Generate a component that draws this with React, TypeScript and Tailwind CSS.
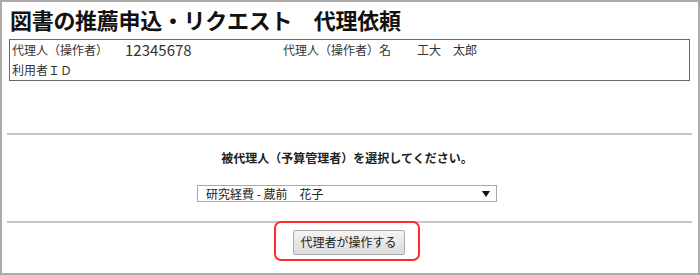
export default function App() {
  return (
    <div className="w-[700px] h-[275px] border-2 border-[#ababab] bg-white text-[#333] font-['Noto_Sans_CJK_JP','Noto_Sans',sans-serif] overflow-hidden">
      {/* Title */}
      <h1 className="mt-[3px] pl-[8px] text-[22px] leading-[28px] font-bold text-[#111] tracking-[-0.3px]">
        図書の推薦申込・リクエスト　代理依頼
      </h1>

      {/* Proxy info */}
      <div className="mt-[6px] ml-[7px] w-[681px] h-[42px] border border-[#6a6a6a] text-[12px]">
        <div className="flex h-[20px] items-center pl-[2px]">
          <span className="w-[113px]">代理人（操作者）</span>
          <span className="w-[158px] text-[15px] leading-[20px]">12345678</span>
          <span className="w-[134px]">代理人（操作者）名</span>
          <span>工大　太郎</span>
        </div>
        <div className="flex h-[20px] items-center pl-[2px]">
          <span>利用者ＩＤ</span>
        </div>
      </div>

      <div className="mt-[52px] ml-[5px] w-[685px] h-[2px] bg-[#c6c6c6]" />

      {/* Select */}
      <div className="flex flex-col items-center pr-[6px]">
        <p className="mt-[14px] text-[12px] leading-[18px] font-bold text-[#222]">
          被代理人（予算管理者）を選択してください。
        </p>
        <div className="mt-[18px] w-[300px] h-[17px] border border-[#a9a9a9] flex items-center justify-between pl-[8px] pr-[6px] text-[12px] text-[#222]">
          <span>研究経費 - 蔵前　花子</span>
          <svg width="8" height="6" viewBox="0 0 8 6">
            <path d="M0 0 H8 L4 6 Z" fill="#111" />
          </svg>
        </div>
      </div>

      <div className="mt-[19px] ml-[5px] w-[685px] h-[2px] bg-[#c6c6c6]" />

      {/* Action */}
      <div className="flex justify-center pr-[3px]">
        <div className="relative mt-[5px]">
          <button className="w-[112px] h-[25px] border border-[#acacac] rounded-[2px] bg-gradient-to-b from-[#f4f4f4] to-[#dcdcdc] text-[12px] text-[#222]">
            代理者が操作する
          </button>
          <div className="absolute -left-[19px] -right-[15px] -top-[7px] -bottom-[6px] border-2 border-[#ff2b2b] rounded-[7px]" />
        </div>
      </div>
    </div>
  );
}
